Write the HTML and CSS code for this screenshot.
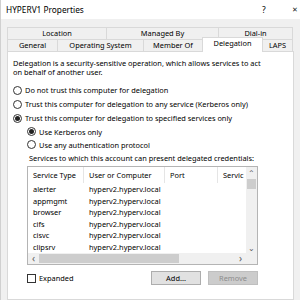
FILE: index.html
```html
<!DOCTYPE html>
<html>
<head>
<meta charset="utf-8">
<link rel="stylesheet" href="styles.css">
</head>
<body>
<div class="window">
  <div class="titlebar">
    <span class="title">HYPERV1 Properties</span>
    <span class="help">?</span>
    <span class="close">✕</span>
  </div>
  <div class="tabs">
    <div class="tabrow">
      <div class="tab w-loc">Location</div>
      <div class="tab w-man">Managed By</div>
      <div class="tab w-dial">Dial-in</div>
    </div>
    <div class="tabrow">
      <div class="tab w-gen">General</div>
      <div class="tab w-os">Operating System</div>
      <div class="tab w-mem">Member Of</div>
      <div class="tab w-del active">Delegation</div>
      <div class="tab w-laps">LAPS</div>
    </div>
  </div>
  <div class="panel">
    <p class="intro">Delegation is a security-sensitive operation, which allows services to act on behalf of another user.</p>
    <div class="options">
      <label class="radio"><span class="dot"></span>Do not trust this computer for delegation</label>
      <label class="radio"><span class="dot"></span>Trust this computer for delegation to any service (Kerberos only)</label>
      <label class="radio"><span class="dot on"></span>Trust this computer for delegation to specified services only</label>
      <label class="radio sub"><span class="dot on"></span>Use Kerberos only</label>
      <label class="radio sub"><span class="dot"></span>Use any authentication protocol</label>
    </div>
    <div class="services">
      <div class="svc-label">Services to which this account can present delegated credentials:</div>
      <div class="list">
        <div class="view">
          <div class="row head">
            <div class="c c1">Service Type</div>
            <div class="c c2">User or Computer</div>
            <div class="c c3">Port</div>
            <div class="c c4">Servic</div>
          </div>
          <div class="row"><div class="c c1">alerter</div><div class="c c2">hyperv2.hyperv.local</div><div class="c c3"></div><div class="c c4"></div></div>
          <div class="row"><div class="c c1">appmgmt</div><div class="c c2">hyperv2.hyperv.local</div><div class="c c3"></div><div class="c c4"></div></div>
          <div class="row"><div class="c c1">browser</div><div class="c c2">hyperv2.hyperv.local</div><div class="c c3"></div><div class="c c4"></div></div>
          <div class="row"><div class="c c1">cifs</div><div class="c c2">hyperv2.hyperv.local</div><div class="c c3"></div><div class="c c4"></div></div>
          <div class="row"><div class="c c1">cisvc</div><div class="c c2">hyperv2.hyperv.local</div><div class="c c3"></div><div class="c c4"></div></div>
          <div class="row"><div class="c c1">clipsrv</div><div class="c c2">hyperv2.hyperv.local</div><div class="c c3"></div><div class="c c4"></div></div>
        </div>
        <div class="vscroll">
          <span class="arrow">&#8963;</span>
          <span class="thumb-v"></span>
          <span class="fill"></span>
          <span class="arrow">&#8964;</span>
        </div>
        <div class="hscroll">
          <span class="arrow">&lsaquo;</span>
          <span class="thumb-h"></span>
          <span class="fill"></span>
          <span class="arrow">&rsaquo;</span>
        </div>
        <div class="corner"></div>
      </div>
      <div class="actions">
        <label class="check"><span class="box"></span>Expanded</label>
        <div class="buttons">
          <button class="btn">Add...</button>
          <button class="btn disabled">Remove</button>
        </div>
      </div>
    </div>
  </div>
</div>
</body>
</html>
```
FILE: styles.css
```css
* { box-sizing: border-box; }
html, body { margin: 0; padding: 0; }
body {
  width: 300px;
  height: 300px;
  overflow: hidden;
  font-family: "Noto Sans", "Open Sans", sans-serif;
  font-size: 7.4px;
  color: #000;
  background: #f0f0f0;
}
.window {
  width: 300px;
  height: 300px;
  display: flex;
  flex-direction: column;
  background: #f0f0f0;
  border-left: 1px solid #d0d0d0;
}
.titlebar {
  height: 19px;
  flex: none;
  background: #fff;
  display: flex;
  align-items: center;
  padding-left: 5px;
  font-size: 8.3px;
}
.title { flex: 1; }
.help { width: 10px; margin-right: 20px; font-size: 8.5px; }
.close { font-size: 7px; width: 7px; margin-right: 1px; color: #222; }

.tabs {
  margin-top: 8px;
  padding-left: 6px;
  display: flex;
  flex-direction: column;
}
.tabrow { display: flex; height: 12px; }
.tab {
  border: 1px solid #d9d9d9;
  border-right: none;
  border-bottom: none;
  display: flex;
  align-items: center;
  justify-content: center;
  background: #f0f0f0;
  line-height: 1;
}
.tabrow .tab:last-child { border-right: 1px solid #d9d9d9; }
.w-loc { width: 99px; }
.w-man { width: 112px; }
.w-dial { width: 75px; }
.w-gen { width: 50px; }
.w-os { width: 86px; }
.w-mem { width: 59px; }
.w-del { width: 61px; }
.w-laps { width: 30px; }
.tab.active {
  background: #fff;
  height: 15px;
  margin-top: -2px;
  position: relative;
  z-index: 1;
  border-color: #d9d9d9;
  border-right: 1px solid #d9d9d9;
  padding-bottom: 2px;
}
.tab.active + .tab { border-left: none; }

.panel {
  margin-left: 6px;
  width: 287px;
  flex: 1;
  background: #fff;
  border: 1px solid #d9d9d9;
  padding: 7px 0 0 5px;
}
.intro {
  margin: 0;
  width: 250px;
  line-height: 9px;
}
.options {
  margin-top: 6px;
  display: flex;
  flex-direction: column;
}
.radio {
  display: flex;
  align-items: center;
  height: 14px;
}
.radio.sub { padding-left: 14px; height: 13px; }
.dot {
  width: 9px;
  height: 9px;
  border: 1px solid #333;
  border-radius: 50%;
  margin-right: 3px;
  display: flex;
  align-items: center;
  justify-content: center;
  flex: none;
}
.dot.on::after {
  content: "";
  width: 5px;
  height: 5px;
  border-radius: 50%;
  background: #222;
}
.services { padding-left: 14px; }
.svc-label { height: 10px; line-height: 10px; margin-top: 2px; padding-left: 2px; }
.list {
  margin-top: 3px;
  width: 231px;
  height: 99px;
  border: 1px solid #b4b4b4;
  display: grid;
  grid-template-columns: 1fr 11px;
  grid-template-rows: 1fr 11px;
}
.view { overflow: hidden; }
.row { display: flex; height: 11.5px; align-items: center; white-space: nowrap; }
.row.head { height: 16px; margin-bottom: 0.5px; }
.head .c { border-right: 1px solid #e5e5e5; height: 16px; line-height: 16px; }
.c { padding-left: 5px; flex: none; overflow: hidden; }
.c1 { width: 56px; }
.c2 { width: 81px; }
.c3 { width: 53px; }
.c4 { width: 40px; }
.vscroll, .hscroll {
  background: #f0f0f0;
  display: flex;
  align-items: center;
  color: #606060;
}
.vscroll { flex-direction: column; }
.vscroll .arrow { height: 11px; line-height: 11px; font-size: 8px; text-align: center; width: 11px; }
.thumb-v { width: 9px; height: 10px; margin-top: 1px; background: #cdcdcd; }
.fill { flex: 1; }
.hscroll .arrow { width: 11px; text-align: center; font-size: 10px; line-height: 11px; }
.thumb-h { height: 9px; width: 140px; background: #cdcdcd; }
.corner { background: #f0f0f0; }

.actions {
  margin-top: 6px;
  width: 231px;
  display: flex;
  align-items: center;
  justify-content: space-between;
}
.check { display: flex; align-items: center; }
.box {
  width: 9px;
  height: 9px;
  border: 1px solid #333;
  background: #fff;
  margin-right: 3px;
}
.buttons { display: flex; gap: 7px; }
.btn {
  width: 50px;
  height: 14px;
  padding: 0;
  font: inherit;
  background: #e1e1e1;
  border: 1px solid #adadad;
  color: #000;
}
.btn.disabled {
  background: #cccccc;
  border-color: #bfbfbf;
  color: #8c8c8c;
}
```
